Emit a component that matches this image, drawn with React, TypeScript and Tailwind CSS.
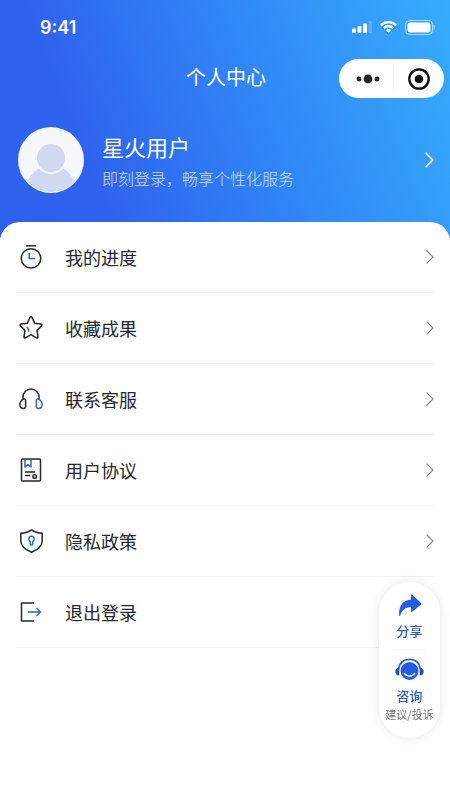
import React from "react";

const ink = "#25262b";
const blue = "#2b62dc";

function Chevron({ className }: { className: string }) {
  return (
    <svg className={className} viewBox="0 0 8 14" fill="none" stroke="currentColor" strokeLinecap="round" strokeLinejoin="round" aria-hidden="true">
      <path d="M1 1l6 6-6 6" />
    </svg>
  );
}

function Icon({ children }: { children: React.ReactNode }) {
  return (
    <svg className="h-6 w-6 shrink-0" viewBox="0 0 24 24" fill="none" stroke={ink} strokeWidth="1.5" strokeLinejoin="round" aria-hidden="true">
      {children}
    </svg>
  );
}

const items = [
  {
    label: "我的进度",
    icon: (
      <Icon>
        <path d="M7.2 0.8h9.6" />
        <circle cx="12" cy="13.4" r="9.7" />
        <path d="M10.2 8v5.4h6.2" stroke={blue} />
      </Icon>
    ),
  },
  {
    label: "收藏成果",
    icon: (
      <Icon>
        <path d="M10.9 1.6Q12 0 13.1 1.6l2.6 5.6 6 .9q2 .5.7 2l-4.4 4.3 1 6.2q.2 1.9-1.6 1.2L12 18.7l-5.4 3.1q-1.8.7-1.6-1.2l1-6.2-4.4-4.3q-1.3-1.5.7-2l6-.9z" />
        <path d="M7.6 11.2c1.5 1 2.3 2.4 2.1 4.5" stroke={blue} />
      </Icon>
    ),
  },
  {
    label: "联系客服",
    icon: (
      <Icon>
        <path d="M4 12.2V10a8 8 0 0 1 16 0v2.2" />
        <path d="M5.8 12C3.4 11.8.8 14.4.8 17.2c0 2.4 1.7 4.2 4.2 4.2 1.2 0 1.6-.7 1.6-1.8v-6.2c0-.8-.2-1.3-.8-1.4z" />
        <path d="M18.2 12c2.4-.2 5 2.400 5 5.200 0 2.400-1.700 4.200-4.200 4.200-1.200 0-1.600-.7-1.600-1.800v-6.200c0-.8.2-1.300.8-1.400z" stroke={blue} />
      </Icon>
    ),
  },
  {
    label: "用户协议",
    icon: (
      <Icon>
        <rect x="2.5" y="1" width="19" height="22" rx="1" />
        <path d="M6 1.5v7.500l3-2.300 3 2.300V1.500" stroke={blue} />
        <path d="M6 14h10M6 17.500h5" />
        <circle cx="15.700" cy="18.500" r="1.800" />
      </Icon>
    ),
  },
  {
    label: "隐私政策",
    icon: (
      <Icon>
        <path d="M12.500 .9c3 2.200 6.500 3.200 10.700 3.300v7.500c0 5.500-5 9.200-10.700 11.500C6.800 20.900 1.800 17.200 1.800 11.700V4.200C6 4.100 9.500 3.100 12.500 .9z" />
        <path d="M11.300 12.400a2.700 2.700 0 1 1 2.400 0v2.800q-1.200 1.600-2.400 0z" stroke={blue} />
      </Icon>
    ),
  },
  {
    label: "退出登录",
    icon: (
      <Icon>
        <path d="M15 3H2.500v18H15" />
        <path d="M9 12h12.500M17.500 8l4 4-4 4" stroke={blue} />
      </Icon>
    ),
  },
];

function StatusBar() {
  return (
    <div className="flex h-[54px] items-center justify-between pr-[15px] pl-10 text-white">
      <span className="font-['Inter','Liberation_Sans',sans-serif] text-[18px] font-semibold">9:41</span>
      <div className="flex items-center gap-2">
        <svg className="h-3 w-5" viewBox="0 0 20 12" fill="currentColor" aria-hidden="true">
          <rect y="7.5" width="4" height="4.5" rx="1" />
          <rect x="5.5" y="5" width="4" height="7" rx="1" />
          <rect x="11" y="2.5" width="4" height="9.5" rx="1" />
          <rect x="16.5" width="3.5" height="12" rx="1" opacity=".2" />
        </svg>
        <svg className="h-3 w-[17px]" viewBox="0 0 17 12" aria-hidden="true">
          <g fill="none" stroke="currentColor" strokeWidth="2.3">
            <path d="M.8 4.3a11 11 0 0 1 15.4 0" />
            <path d="M3.6 7.1a7 7 0 0 1 9.8 0" />
          </g>
          <path d="M5.8 9.3a3.900 3.900 0 0 1 5.400 0L8.500 12z" fill="currentColor" />
        </svg>
        <svg className="h-[15px] w-[30px]" viewBox="0 0 30 15" aria-hidden="true">
          <rect x=".5" y=".5" width="27" height="14" rx="4" fill="none" stroke="currentColor" opacity=".6" />
          <rect x="2.5" y="2.5" width="23" height="10" rx="2.3" fill="currentColor" />
          <path d="M29 5.500q1 2 0 4z" fill="currentColor" stroke="currentColor" opacity=".4" />
        </svg>
      </div>
    </div>
  );
}

export default function App() {
  return (
    <div className="min-h-screen bg-white font-['Noto_Sans_CJK_SC',sans-serif] text-[#25262b]">
      <header className="bg-[linear-gradient(68deg,#2e61ee_0%,#2f63ee_22%,#3187f7_58%,#36adfc_100%)] pb-4 text-white">
        <StatusBar />
        <div className="grid h-[49px] grid-cols-[1fr_auto_1fr] items-center pr-[6px]">
          <span />
          <h1 className="pb-1 pl-2 text-[20px] leading-[30px]">个人中心</h1>
          <div className="flex h-[39px] w-[105px] items-center justify-self-end rounded-full bg-white text-black">
            <button type="button" aria-label="更多" className="flex h-full flex-1 items-center justify-center pl-1">
              <svg className="h-6 w-6" viewBox="0 0 24 24" fill="#252525" aria-hidden="true">
                <circle cx="3" cy="12" r="2.4" />
                <circle cx="12" cy="12" r="4.4" />
                <circle cx="21" cy="12" r="2.4" />
              </svg>
            </button>
            <span className="h-6 w-px bg-gray-100" />
            <button type="button" aria-label="关闭" className="flex h-full flex-1 items-center justify-center">
              <svg className="h-6 w-6" viewBox="0 0 24 24" aria-hidden="true">
                <circle cx="12" cy="12" r="9.7" fill="none" stroke="#0b0b0b" strokeWidth="2.3" />
                <circle cx="12" cy="12" r="4.3" fill="#0b0b0b" />
              </svg>
            </button>
          </div>
        </div>
        <button type="button" className="flex h-[119px] w-full items-center pr-4 pb-[5px] pl-[18px] text-left">
          <svg className="h-[66px] w-[66px] shrink-0" viewBox="0 0 66 66" aria-hidden="true">
            <defs>
              <clipPath id="avatar">
                <circle cx="33" cy="33" r="32" />
              </clipPath>
            </defs>
            <circle cx="33" cy="33" r="33" fill="#f6f7fb" />
            <g clipPath="url(#avatar)" fill="#d0d9f0">
              <path d="M9 55C14 46 18 42 24 41h18c6 1 10 5 15 14v11H9z" />
              <circle cx="33" cy="31" r="16" fill="#f6f7fb" />
              <circle cx="33" cy="31" r="14" />
            </g>
          </svg>
          <span className="flex flex-1 flex-col gap-1 pl-[18px]">
            <span className="text-[22px] leading-8">星火用户</span>
            <span className="text-[16px] leading-6 font-light text-[#c8e0ff]">即刻登录，畅享个性化服务</span>
          </span>
          <Chevron className="h-4 w-[9px] stroke-[1.5]" />
        </button>
      </header>

      <main className="-mt-4 rounded-t-[20px] bg-white">
        <ul>
          {items.map((item, index) => (
            <li key={item.label} className="px-4">
              <button type="button" className="flex h-[71px] w-full items-center gap-[22px] border-b border-[#f3f3f5] pl-[3px] text-left">
                {item.icon}
                <span className="flex-1 pb-px text-[18px] leading-7">{item.label}</span>
                {index < items.length - 1 && <Chevron className="h-[14px] w-2 stroke-[1.2] text-[#85868b]" />}
              </button>
            </li>
          ))}
        </ul>
      </main>

      <aside className="fixed right-[10px] bottom-[62px] flex w-[61px] flex-col items-center rounded-full bg-white pt-3 pb-4 text-[#2b59cc] shadow-[0_0_12px_rgba(0,0,0,0.1)]">
        <button type="button" className="flex w-full flex-col items-center gap-1">
          <svg className="h-[23px] w-6" viewBox="0 0 24 23" fill="#255ce5" aria-hidden="true">
            <path d="M13 1.3q0-1.400 1.200-.5l8.600 8q1 1 0 2l-8.600 7q-1.200.9-1.200-.6v-4C8 13 4 15.500 2.200 21.500q-.6 1.400-1 0C.2 12.500 5 6 13 5.500z" />
          </svg>
          <span className="text-[13px] leading-5 font-medium">分享</span>
        </button>
        <span className="mt-2 mb-2 h-px w-8 bg-gray-100" />
        <button type="button" className="flex w-full flex-col items-center">
          <svg className="h-6 w-[29px]" viewBox="0 0 29 24" aria-hidden="true">
            <path d="M3.5 11C4.5 4.5 9 1.3 14.5 1.3S24.5 4.5 25.5 11" fill="none" stroke="#255ce5" strokeWidth="1.7" />
            <path d="M4.3 9.500v8C1.500 17.500.3 15.800.3 13.500s1.500-4 4-4zM24.700 9.500v8c2.800 0 4-1.700 4-4s-1.500-4-4-4z" fill="#284fae" />
            <circle cx="14.5" cy="13" r="9" fill="#255ce5" />
            <path d="M9.300 15.500q5.200 5.500 10.400 0" fill="none" stroke="#fff" strokeWidth="1.6" strokeLinecap="round" />
          </svg>
          <span className="mt-1 text-[13px] leading-5 font-medium">咨询</span>
          <span className="text-[11px] leading-4 whitespace-nowrap text-[#77787c]">建议/投诉</span>
        </button>
      </aside>
    </div>
  );
}
